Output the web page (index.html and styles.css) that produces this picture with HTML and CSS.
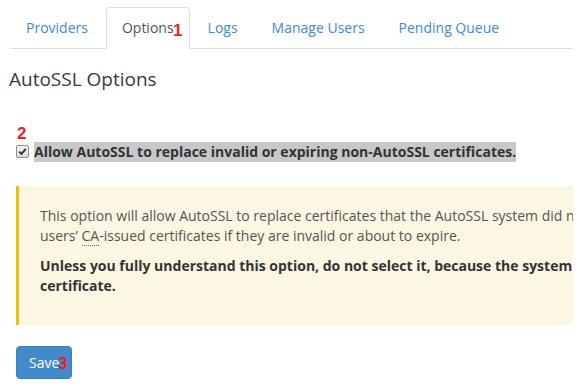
FILE: index.html
```html
<!DOCTYPE html>
<html>
<head>
<meta charset="utf-8">
<link rel="stylesheet" href="styles.css">
</head>
<body>
<div class="page">
  <div class="inner">
    <ul class="tabs">
      <li class="tab"><a href="#">Providers</a></li>
      <li class="tab active"><a href="#">Options</a><span class="mark mark-1">1</span></li>
      <li class="tab"><a href="#">Logs</a></li>
      <li class="tab"><a href="#">Manage Users</a></li>
      <li class="tab"><a href="#">Pending Queue</a></li>
    </ul>
    <h4 class="title">AutoSSL Options</h4>
    <form class="form">
      <div class="check-group">
        <span class="mark mark-2">2</span>
        <label class="check-label">
          <input type="checkbox" class="check-input" checked>
          <span class="check-box"><svg width="9" height="9" viewBox="0 0 9 9"><path d="M1.2 4.6 L3.5 6.9 L7.9 1.8" fill="none" stroke="#333" stroke-width="1.8"/></svg></span>
          <span class="check-text">Allow AutoSSL to replace invalid or expiring non-AutoSSL certificates.</span>
        </label>
      </div>
      <div class="alert">
        <p class="alert-text">This option will allow AutoSSL to replace certificates that the AutoSSL system did not issue. When you enable this option, AutoSSL will replace<br>users’ <abbr class="abbr" title="Certificate Authority">CA</abbr>-issued certificates if they are invalid or about to expire.</p>
        <p class="alert-strong">Unless you fully understand this option, do not select it, because the system will replace a user’s valid certificate with an AutoSSL<br>certificate.</p>
      </div>
      <div class="actions">
        <button type="button" class="btn">Save</button>
        <span class="mark mark-3">3</span>
      </div>
    </form>
  </div>
</div>
</body>
</html>
```
FILE: styles.css
```css
html, body {
  margin: 0;
  padding: 0;
  background: #fff;
}
body {
  font-family: "Open Sans", "Liberation Sans", sans-serif;
  font-size: 14px;
  line-height: 20px;
  color: #333;
}
.page {
  width: 573px;
  overflow: hidden;
  padding-left: 10px;
  box-sizing: border-box;
}
.inner {
  width: 1200px;
}
.tabs {
  list-style: none;
  margin: 7px 0 0 0;
  padding: 0;
  display: flex;
  border-bottom: 1px solid #ddd;
}
.tab {
  position: relative;
  margin-right: 2px;
  margin-bottom: -1px;
}
.tab a {
  display: block;
  padding: 10px 15px;
  border: 1px solid transparent;
  border-radius: 4px 4px 0 0;
  color: #428bca;
  text-decoration: none;
}
.tab.active a {
  color: #555;
  background: #fff;
  border-color: #ddd #ddd transparent #ddd;
}
.mark {
  position: absolute;
  font-family: "Liberation Sans", Arial, sans-serif;
  font-weight: bold;
  font-size: 17px;
  line-height: 17px;
  color: #ee1c25;
}
.mark-1 {
  left: 67px;
  top: 15px;
}
.title {
  margin: 20px 0 0 -1px;
  font-size: 19px;
  line-height: 20px;
  font-weight: normal;
  color: #3a3a3a;
}
.form {
  margin-left: 6px;
}
.check-group {
  position: relative;
  margin-top: 53px;
}
.mark-2 {
  left: 1px;
  top: -17px;
}
.check-label {
  display: flex;
  align-items: center;
  font-weight: bold;
}
.check-input {
  position: absolute;
  opacity: 0;
  width: 1px;
  height: 1px;
  margin: 0;
}
.check-box {
  width: 11px;
  height: 11px;
  border: 1px solid #8f8f8f;
  border-radius: 2px;
  background: linear-gradient(#f4f4f4, #dcdcdc);
  display: flex;
  align-items: center;
  justify-content: center;
  margin: 0 5px 1px 0;
  flex: none;
}
.check-text {
  background: #c8c8c8;
  color: #333;
}
.alert {
  margin-top: 24px;
  background: #fcf7e3;
  border-left: 3px solid #f0c000;
  padding: 20px 20px 19px 21px;
  color: #555;
}
.alert p {
  margin: 0 0 10px 0;
}
.alert-strong {
  font-weight: bold;
  color: #333;
}
.abbr {
  text-decoration: none;
  border-bottom: 1px dotted #777;
  cursor: help;
}
.actions {
  position: relative;
  margin-top: 21px;
  display: flex;
}
.btn {
  font-family: "Open Sans", "Liberation Sans", sans-serif;
  font-size: 14px;
  line-height: 20px;
  padding: 6px 12px;
  width: 56px;
  height: 33px;
  text-align: left;
  color: #fff;
  background: #428bca;
  border: 1px solid #3a80c0;
  border-radius: 4px;
}
.mark-3 {
  left: 42px;
  top: 9px;
}
```
